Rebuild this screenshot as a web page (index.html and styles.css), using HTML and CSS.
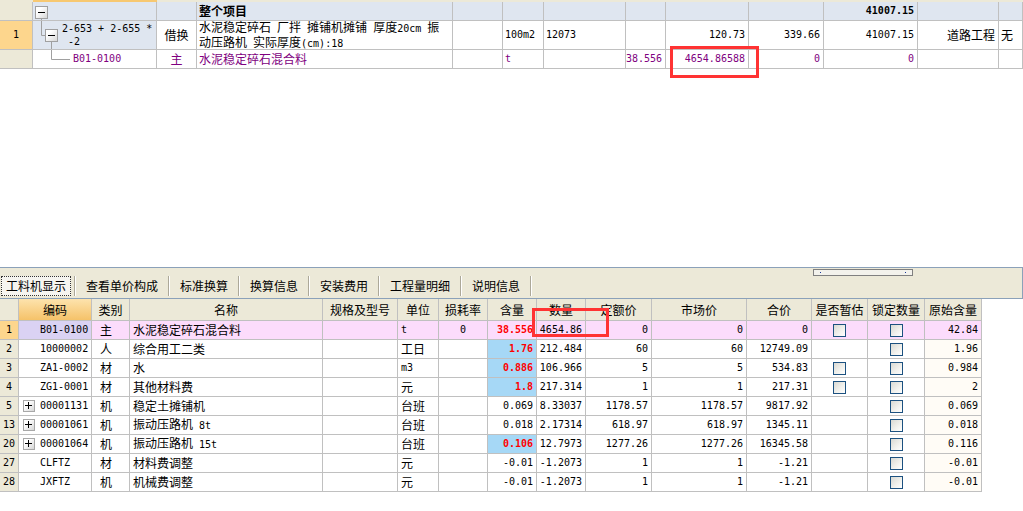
FILE: index.html
```html
<!DOCTYPE html>
<html lang="zh-CN">
<head>
<meta charset="utf-8">
<title>工料机显示</title>
<link rel="stylesheet" href="styles.css">
</head>
<body>
<div class="page">
  <div class="toppane">
    <div class="tgrid">
      <div class="strip"></div>

      <div class="c rn"></div>
      <div class="c hb"><svg class="tree" width="16" height="18" viewBox="0 0 16 18"><defs><linearGradient id="ga" x1="0" y1="0" x2="1" y2="1"><stop offset="0.3" stop-color="#fff"/><stop offset="1" stop-color="#d4d4d4"/></linearGradient></defs><rect x="2.5" y="4.5" width="12" height="12" fill="url(#ga)" stroke="#a0a0a0"/><path d="M5 10.5h7" stroke="#000"/><path d="M8.5 17v1" stroke="#a0a0a0"/></svg></div>
      <div class="c hb"></div>
      <div class="c hb l cjkb">整个项目</div>
      <div class="c hb"></div>
      <div class="c hb"></div>
      <div class="c hb"></div>
      <div class="c hb"></div>
      <div class="c hb"></div>
      <div class="c hb"></div>
      <div class="c hb r n nb">41007.15</div>
      <div class="c hb"></div>
      <div class="c hb"></div>

      <div class="c rn sel n">1</div>
      <div class="c hb vis"><svg class="tree tree1" width="27" height="28" viewBox="0 0 27 28"><defs><linearGradient id="gb" x1="0" y1="0" x2="1" y2="1"><stop offset="0.3" stop-color="#fff"/><stop offset="1" stop-color="#d4d4d4"/></linearGradient></defs><path d="M8.5 0v14.5H12M18.5 21v7" stroke="#a0a0a0" fill="none"/><rect x="12.5" y="8.5" width="12" height="12" fill="url(#gb)" stroke="#a0a0a0"/><path d="M15 14.5h7" stroke="#000"/></svg><div class="lines n"><div>2-653 + 2-655 *</div><div> -2</div></div></div>
      <div class="c cc">借换</div>
      <div class="c l vis"><div class="lines"><div>水泥稳定碎石<span class="n"> </span>厂拌<span class="n"> </span>摊铺机摊铺<span class="n"> </span>厚度<span class="n">20cm </span>振</div><div>动压路机<span class="n"> </span>实际厚度<span class="n">(cm):18</span></div></div></div>
      <div class="c"></div>
      <div class="c l n">100m2</div>
      <div class="c l n">12073</div>
      <div class="c"></div>
      <div class="c r n">120.73</div>
      <div class="c r n">339.66</div>
      <div class="c r n">41007.15</div>
      <div class="c r">道路工程</div>
      <div class="c l">无</div>

      <div class="c rn"></div>
      <div class="c pu"><svg class="tree tree2" width="38" height="18" viewBox="0 0 38 18"><path d="M18.5 0v9.5H37" stroke="#a0a0a0" fill="none"/></svg><span class="n">B01-0100</span></div>
      <div class="c cc pu">主</div>
      <div class="c l pu">水泥稳定碎石混合料</div>
      <div class="c"></div>
      <div class="c l n pu">t</div>
      <div class="c"></div>
      <div class="c r n pu">38.556</div>
      <div class="c r n pu">4654.86588</div>
      <div class="c r n pu">0</div>
      <div class="c r n pu">0</div>
      <div class="c"></div>
      <div class="c"></div>
    </div>
  </div>

  <div class="tabbar">
    <div class="tab on">工料机显示</div>
    <div class="sep"></div>
    <div class="tab">查看单价构成</div>
    <div class="sep"></div>
    <div class="tab">标准换算</div>
    <div class="sep"></div>
    <div class="tab">换算信息</div>
    <div class="sep"></div>
    <div class="tab">安装费用</div>
    <div class="sep"></div>
    <div class="tab">工程量明细</div>
    <div class="sep"></div>
    <div class="tab">说明信息</div>
    <div class="sep"></div>
    <div class="grip"></div>
  </div>

  <div class="bgrid">
    <div class="c h"></div>
    <div class="c h hsel">编码</div>
    <div class="c h">类别</div>
    <div class="c h">名称</div>
    <div class="c h">规格及型号</div>
    <div class="c h">单位</div>
    <div class="c h">损耗率</div>
    <div class="c h">含量</div>
    <div class="c h">数量</div>
    <div class="c h">定额价</div>
    <div class="c h">市场价</div>
    <div class="c h">合价</div>
    <div class="c h">是否暂估</div>
    <div class="c h">锁定数量</div>
    <div class="c h">原始含量</div>

    <div class="c rn sel n">1</div>
    <div class="c code lav n">B01-0100</div>
    <div class="c kind p">主</div>
    <div class="c l3 p">水泥稳定碎石混合料</div>
    <div class="c p"></div>
    <div class="c l3 p n">t</div>
    <div class="c cc p n">0</div>
    <div class="c r3 p n red">38.556</div>
    <div class="c r3 p n">4654.86</div>
    <div class="c r3 p n">0</div>
    <div class="c r3 p n">0</div>
    <div class="c r3 p n">0</div>
    <div class="c cc p"><i class="cb"></i></div>
    <div class="c cc p"><i class="cb"></i></div>
    <div class="c r3 p n">42.84</div>

    <div class="c rn n">2</div>
    <div class="c code n">10000002</div>
    <div class="c kind">人</div>
    <div class="c l3">综合用工二类</div>
    <div class="c"></div>
    <div class="c l3">工日</div>
    <div class="c"></div>
    <div class="c r3 n red blue">1.76</div>
    <div class="c r3 n">212.484</div>
    <div class="c r3 n">60</div>
    <div class="c r3 n">60</div>
    <div class="c r3 n">12749.09</div>
    <div class="c cc"></div>
    <div class="c cc"><i class="cb"></i></div>
    <div class="c r3 n cr">1.96</div>

    <div class="c rn n">3</div>
    <div class="c code n">ZA1-0002</div>
    <div class="c kind">材</div>
    <div class="c l3">水</div>
    <div class="c"></div>
    <div class="c l3 n">m3</div>
    <div class="c"></div>
    <div class="c r3 n red blue">0.886</div>
    <div class="c r3 n">106.966</div>
    <div class="c r3 n">5</div>
    <div class="c r3 n">5</div>
    <div class="c r3 n">534.83</div>
    <div class="c cc"><i class="cb"></i></div>
    <div class="c cc"><i class="cb"></i></div>
    <div class="c r3 n cr">0.984</div>

    <div class="c rn n">4</div>
    <div class="c code n">ZG1-0001</div>
    <div class="c kind">材</div>
    <div class="c l3">其他材料费</div>
    <div class="c"></div>
    <div class="c l3">元</div>
    <div class="c"></div>
    <div class="c r3 n red blue">1.8</div>
    <div class="c r3 n">217.314</div>
    <div class="c r3 n">1</div>
    <div class="c r3 n">1</div>
    <div class="c r3 n">217.31</div>
    <div class="c cc"><i class="cb"></i></div>
    <div class="c cc"><i class="cb"></i></div>
    <div class="c r3 n cr">2</div>

    <div class="c rn n">5</div>
    <div class="c code x"><i class="tg"></i><span class="n">00001131</span></div>
    <div class="c kind">机</div>
    <div class="c l3">稳定土摊铺机</div>
    <div class="c"></div>
    <div class="c l3">台班</div>
    <div class="c"></div>
    <div class="c r3 n">0.069</div>
    <div class="c r3 n">8.33037</div>
    <div class="c r3 n">1178.57</div>
    <div class="c r3 n">1178.57</div>
    <div class="c r3 n">9817.92</div>
    <div class="c cc"></div>
    <div class="c cc"><i class="cb"></i></div>
    <div class="c r3 n cr">0.069</div>

    <div class="c rn n">13</div>
    <div class="c code x"><i class="tg"></i><span class="n">00001061</span></div>
    <div class="c kind">机</div>
    <div class="c l3"><span>振动压路机<span class="n"> 8t</span></span></div>
    <div class="c"></div>
    <div class="c l3">台班</div>
    <div class="c"></div>
    <div class="c r3 n">0.018</div>
    <div class="c r3 n">2.17314</div>
    <div class="c r3 n">618.97</div>
    <div class="c r3 n">618.97</div>
    <div class="c r3 n">1345.11</div>
    <div class="c cc"></div>
    <div class="c cc"><i class="cb"></i></div>
    <div class="c r3 n cr">0.018</div>

    <div class="c rn n">20</div>
    <div class="c code x"><i class="tg"></i><span class="n">00001064</span></div>
    <div class="c kind">机</div>
    <div class="c l3"><span>振动压路机<span class="n"> 15t</span></span></div>
    <div class="c"></div>
    <div class="c l3">台班</div>
    <div class="c"></div>
    <div class="c r3 n red blue">0.106</div>
    <div class="c r3 n">12.7973</div>
    <div class="c r3 n">1277.26</div>
    <div class="c r3 n">1277.26</div>
    <div class="c r3 n">16345.58</div>
    <div class="c cc"></div>
    <div class="c cc"><i class="cb"></i></div>
    <div class="c r3 n cr">0.116</div>

    <div class="c rn n">27</div>
    <div class="c code n">CLFTZ</div>
    <div class="c kind">材</div>
    <div class="c l3">材料费调整</div>
    <div class="c"></div>
    <div class="c l3">元</div>
    <div class="c"></div>
    <div class="c r3 n">-0.01</div>
    <div class="c r3 n">-1.2073</div>
    <div class="c r3 n">1</div>
    <div class="c r3 n">1</div>
    <div class="c r3 n">-1.21</div>
    <div class="c cc"></div>
    <div class="c cc"><i class="cb"></i></div>
    <div class="c r3 n cr">-0.01</div>

    <div class="c rn n">28</div>
    <div class="c code n">JXFTZ</div>
    <div class="c kind">机</div>
    <div class="c l3">机械费调整</div>
    <div class="c"></div>
    <div class="c l3">元</div>
    <div class="c"></div>
    <div class="c r3 n">-0.01</div>
    <div class="c r3 n">-1.2073</div>
    <div class="c r3 n">1</div>
    <div class="c r3 n">1</div>
    <div class="c r3 n">-1.21</div>
    <div class="c cc"></div>
    <div class="c cc"><i class="cb"></i></div>
    <div class="c r3 n cr">-0.01</div>
  </div>

  <div class="mark mark1"></div>
  <div class="mark mark2"></div>
</div>
</body>
</html>
```

FILE: styles.css
```css
html, body {
  margin: 0;
  padding: 0;
  background: #fff;
}
body {
  width: 1023px;
  height: 511px;
  overflow: hidden;
  font-family: "Noto Sans CJK SC", sans-serif;
  font-size: 12px;
  line-height: 12px;
  color: #000;
}
.page {
  position: relative;
  width: 1023px;
  height: 511px;
}
.n {
  font-family: "DejaVu Sans Mono", monospace;
  font-size: 10px;
}

/* ---------- top pane ---------- */
.toppane {
  height: 267px;
}
.tgrid {
  display: grid;
  grid-template-columns: 33px 124px 40px 256px 50px 41px 82px 40px 83px 75px 94px 81px 24px;
  grid-template-rows: 2px 19px 29px 19px;
}
.strip {
  grid-column: 1 / -1;
  background: linear-gradient(to right, #ece9d8 0 33px, #f7c871 33px 157px, #ece9d8 157px);
}
.c {
  box-sizing: border-box;
  border-right: 1px solid #c0c0c0;
  border-bottom: 1px solid #c0c0c0;
  display: flex;
  align-items: center;
  white-space: nowrap;
  overflow: hidden;
  min-width: 0;
}
.c.vis {
  overflow: visible;
}
.rn {
  background: #ece9d8;
  justify-content: center;
}
.rn.sel {
  background: #fdd68d;
}
.hb {
  background: #dfe6f0;
}
.tgrid .l {
  padding-left: 2px;
}
.tgrid .r {
  justify-content: flex-end;
  padding-right: 3px;
}
.cc {
  justify-content: center;
}
.cjkb {
  font-weight: 700;
}
.nb {
  font-weight: 700;
}
.pu {
  color: #800080;
}
.tree {
  flex: none;
  display: block;
}
.tree1, .tree2 {
  margin-right: 2px;
}
.lines {
  display: flex;
  flex-direction: column;
  line-height: 13px;
  white-space: pre;
}

/* ---------- tab bar ---------- */
.tabbar {
  position: relative;
  box-sizing: border-box;
  height: 32px;
  border-top: 1px solid #8ba1b9;
  border-bottom: 1px solid #8ba1b9;
  border-right: 1px solid #8ba1b9;
  background: #ece9d8;
  padding-top: 8px;
  display: flex;
  align-items: flex-start;
}
.tab {
  height: 20px;
  box-sizing: border-box;
  padding: 0 10px;
  display: flex;
  align-items: center;
  white-space: nowrap;
}
.tab.on {
  margin-left: 1px;
  margin-right: 3px;
  padding: 0 4px;
  border: 1px dotted #333;
  background: #f6f5f0;
}
.sep {
  width: 1px;
  height: 20px;
  background: #aca899;
  border-right: 1px solid #fff;
}
.grip {
  position: absolute;
  left: 813px;
  top: 1px;
  width: 100px;
  height: 7px;
  box-sizing: border-box;
  border: 1px solid #808080;
  background: #f3f2ec;
}
.grip::before, .grip::after {
  content: "";
  position: absolute;
  top: 2px;
  width: 1px;
  height: 1px;
  background: #1a3a9a;
}
.grip::before { left: 6px; }
.grip::after { right: 6px; }

/* ---------- bottom grid ---------- */
.bgrid {
  display: grid;
  width: 982px;
  grid-template-columns: 19px 73px 38px 193px 75px 41px 49px 49px 49px 66px 95px 65px 56px 57px 57px;
  grid-template-rows: 22px repeat(9, 19px);
}
.h {
  background: #ece9d8;
  justify-content: center;
}
.hsel {
  background: linear-gradient(to bottom, #fde3ad, #f5c269);
}
.code {
  padding-left: 21px;
}
.code.x {
  padding-left: 4px;
}
.tg {
  position: relative;
  flex: none;
  width: 12px;
  height: 12px;
  box-sizing: border-box;
  border: 1px solid #a8a8a8;
  background: linear-gradient(135deg, #fff 30%, #d6d6d6);
  margin-right: 5px;
}
.tg::before {
  content: "";
  position: absolute;
  left: 1px;
  top: 4px;
  width: 7px;
  height: 1px;
  background: #000;
}
.tg::after {
  content: "";
  position: absolute;
  left: 4px;
  top: 1px;
  width: 1px;
  height: 7px;
  background: #000;
}
.kind {
  padding-left: 8px;
}
.l3 {
  padding-left: 3px;
}
.r3 {
  justify-content: flex-end;
  padding-right: 3px;
}
.p {
  background: #fcdcfc;
}
.lav {
  background: #dad2f3;
}
.blue {
  background: #a6d8f6;
}
.red {
  color: #ff0000;
  font-weight: 700;
}
.cr {
  background: #fffcf6;
}
.cb {
  display: block;
  width: 13px;
  height: 13px;
  box-sizing: border-box;
  border: 1px solid #1c5180;
  background: linear-gradient(135deg, #d9d9d3 0%, #f2f2ee 60%, #ffffff 100%);
}

/* ---------- annotations ---------- */
.mark {
  position: absolute;
  box-sizing: border-box;
  border: 3px solid #ff3333;
}
.mark1 {
  left: 670px;
  top: 46px;
  width: 89px;
  height: 32px;
}
.mark2 {
  left: 532px;
  top: 308px;
  width: 77px;
  height: 29px;
}
```
